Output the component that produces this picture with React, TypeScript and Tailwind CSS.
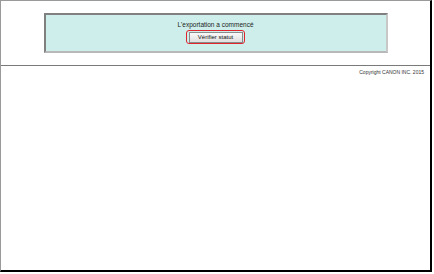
export default function App() {
  return (
    <div className="w-[434px] h-[274px] bg-white" style={{ fontFamily: '"Liberation Sans", Arial, sans-serif' }}>
      <div className="w-[432px] h-[272px] border-l border-t border-l-[#9a9a9a] border-t-[#9a9a9a] border-r-2 border-b-2 border-r-black border-b-black flex flex-col">
        {/* header area */}
        <div className="h-[65px] border-b border-[#7a7a7a] flex justify-center pt-[12px]">
          <div className="w-[344px] h-[40px] bg-[#cdeeeb] border-l-2 border-t-2 border-l-[#808080] border-t-[#808080] border-r-2 border-b-2 border-r-[#c8c8c8] border-b-[#b8b8b8] flex flex-col items-center pt-[6px]">
            <p className="text-[6.5px] leading-[8px] text-[#222]">L'exportation a commencé</p>
            <div className="mt-[1px] flex border-[1.5px] border-[#e0242e] rounded-[3px] px-[1.5px] py-[0.5px]">
              <button className="flex items-center justify-center w-[54px] h-[11px] bg-gradient-to-b from-[#fafafa] to-[#dedede] border border-[#8a8a8a] text-[6px] leading-[8px] text-[#111]">
                Vérifier statut
              </button>
            </div>
          </div>
        </div>
        {/* footer */}
        <div className="flex justify-end pr-[6px] pt-[2px]">
          <span className="text-[5px] leading-[8px] text-[#333]">Copyright CANON INC. 2015</span>
        </div>
      </div>
    </div>
  )
}
